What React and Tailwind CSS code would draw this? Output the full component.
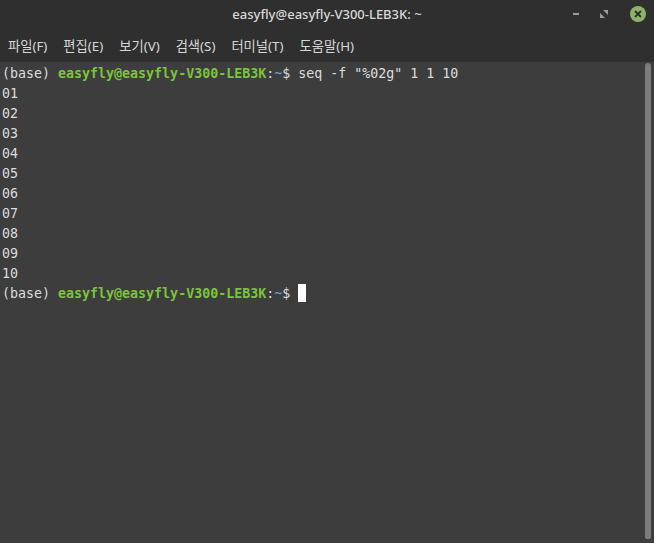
import React from 'react'

// Terminal output lines after the seq command
const NUMBERS = ['01', '02', '03', '04', '05', '06', '07', '08', '09', '10']

const MENUS = ['파일(F)', '편집(E)', '보기(V)', '검색(S)', '터미널(T)', '도움말(H)']

function Prompt({ children }) {
  return (
    <div className="h-[20px] whitespace-pre">
      <span>(base) </span>
      <span className="font-bold text-[#7cc43c]">easyfly@easyfly-V300-LEB3K</span>
      <span>:</span>
      <span className="text-[#6f9fcf]">~</span>
      <span>$ </span>
      {children}
    </div>
  )
}

export default function App() {
  return (
    <div className="w-[654px] h-[543px] flex flex-col bg-[#2f2f2f] overflow-hidden">
      {/* Title bar */}
      <div className="h-[29px] flex items-center relative shrink-0">
        <div className="flex-1 text-center text-[13px] font-medium text-[#d8d8d8] font-['Noto_Sans',sans-serif] pt-[1px]">
          easyfly@easyfly-V300-LEB3K: ~
        </div>
        <div className="absolute right-[8px] top-[6px] flex items-center">
          {/* minimize */}
          <div className="w-[6px] h-[2px] bg-[#9a9a9a] mr-[21px]" />
          {/* maximize */}
          <svg width="8" height="8" viewBox="0 0 8 8" className="mr-[22px]">
            <path d="M0 8 L0 3 L5 8 Z" fill="#9a9a9a" />
            <path d="M8 0 L8 5 L3 0 Z" fill="#9a9a9a" />
          </svg>
          {/* close */}
          <div className="w-[16px] h-[16px] rounded-full bg-[#8db26a] flex items-center justify-center">
            <svg width="8" height="8" viewBox="0 0 8 8">
              <path d="M1 1 L7 7 M7 1 L1 7" stroke="#2f2f2f" strokeWidth="1.8" />
            </svg>
          </div>
        </div>
      </div>

      {/* Menu bar */}
      <div className="h-[33px] flex items-center gap-[16px] pl-[8px] pt-[2px] text-[13.3px] text-[#d8d8d8] font-['Noto_Sans','Noto_Sans_CJK_KR',sans-serif] shrink-0">
        {MENUS.map(m => (
          <span key={m}>{m}</span>
        ))}
      </div>

      {/* Terminal area */}
      <div className="flex-1 flex bg-[#3d3d3d]">
        <div className="flex-1 pl-[2px] pt-[2px] text-[13.3px] leading-[20px] text-[#dcdcdc] font-['DejaVu_Sans_Mono',monospace]">
          <Prompt>seq -f "%02g" 1 1 10</Prompt>
          {NUMBERS.map(n => (
            <div key={n} className="h-[20px]">{n}</div>
          ))}
          <Prompt>
            <span className="inline-block w-[8px] h-[18px] bg-white align-[-4px]" />
          </Prompt>
        </div>
        {/* scrollbar */}
        <div className="w-[9px] pt-[1px] pb-[4px] pr-[3px] flex">
          <div className="w-[6px] flex-1 rounded-t-[3px] rounded-b-[2px] bg-[#7c7c7c]" />
        </div>
      </div>
    </div>
  )
}
